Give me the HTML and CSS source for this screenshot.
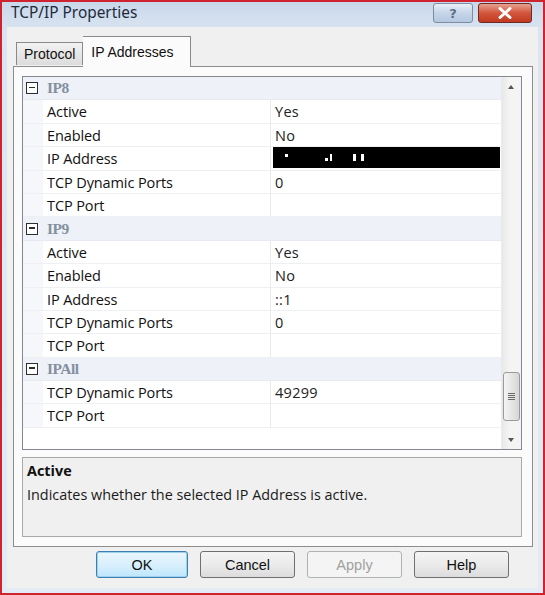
FILE: index.html
```html
<!DOCTYPE html>
<html>
<head>
<meta charset="utf-8">
<link rel="stylesheet" href="styles.css">
</head>
<body>
<div class="window">
  <div class="titlebar">
    <span class="title">TCP/IP Properties</span>
    <div class="caption-btns">
      <div class="cbtn help"><span>?</span></div>
      <div class="cbtn close">
        <svg width="18" height="12" viewBox="0 0 18 12"><path d="M4 1.5 L14 10.5 M14 1.5 L4 10.5" stroke="#fff" stroke-width="3" stroke-linecap="round"/></svg>
      </div>
    </div>
  </div>
  <div class="client">
    <div class="tabs">
      <div class="tab">Protocol</div>
      <div class="tab active">IP Addresses</div>
    </div>
    <div class="pane">
      <div class="grid">
        <div class="rows">
          <div class="cat"><span class="toggle"></span><span class="cat-name">IP8</span></div>
          <div class="prop"><span class="name">Active</span><span class="val">Yes</span></div>
          <div class="prop"><span class="name">Enabled</span><span class="val">No</span></div>
          <div class="prop"><span class="name">IP Address</span><span class="val"><span class="masked"><i class="d1"></i><i class="d2"></i><i class="d3"></i><i class="d4"></i><i class="d5"></i></span></span></div>
          <div class="prop"><span class="name">TCP Dynamic Ports</span><span class="val">0</span></div>
          <div class="prop"><span class="name">TCP Port</span><span class="val"></span></div>
          <div class="cat"><span class="toggle"></span><span class="cat-name">IP9</span></div>
          <div class="prop"><span class="name">Active</span><span class="val">Yes</span></div>
          <div class="prop"><span class="name">Enabled</span><span class="val">No</span></div>
          <div class="prop"><span class="name">IP Address</span><span class="val">::1</span></div>
          <div class="prop"><span class="name">TCP Dynamic Ports</span><span class="val">0</span></div>
          <div class="prop"><span class="name">TCP Port</span><span class="val"></span></div>
          <div class="cat"><span class="toggle"></span><span class="cat-name">IPAll</span></div>
          <div class="prop"><span class="name">TCP Dynamic Ports</span><span class="val">49299</span></div>
          <div class="prop"><span class="name">TCP Port</span><span class="val"></span></div>
        </div>
        <div class="scrollbar">
          <div class="arrow up"></div>
          <div class="track"><div class="thumb"><span class="grip"></span></div></div>
          <div class="arrow down"></div>
        </div>
      </div>
      <div class="desc">
        <div class="desc-title">Active</div>
        <div class="desc-text">Indicates whether the selected IP Address is active.</div>
      </div>
    </div>
    <div class="buttons">
      <div class="btn default">OK</div>
      <div class="btn">Cancel</div>
      <div class="btn disabled">Apply</div>
      <div class="btn">Help</div>
    </div>
  </div>
</div>
</body>
</html>
```

FILE: styles.css
```css
* { box-sizing: border-box; }
html, body { margin: 0; padding: 0; }
body { width: 545px; height: 595px; overflow: hidden; background: #fff; }

.window {
  width: 545px; height: 595px;
  border: 2px solid #cf2430;
  background: linear-gradient(#c9d8ea, #dbe5f1 30px, #e3ebf5);
  display: flex; flex-direction: column;
}
.titlebar {
  height: 25px; flex: none;
  display: flex; align-items: flex-start; justify-content: space-between;
  padding-left: 9px;
}
.title {
  font-family: "Noto Sans", "Open Sans", sans-serif;
  font-size: 15.4px; color: #1e2a3a; line-height: 21px;
}
.caption-btns { display: flex; gap: 5px; padding-top: 1px; padding-right: 11px; }
.cbtn {
  height: 20px; border-radius: 3px;
  display: flex; align-items: center; justify-content: center;
}
.cbtn.help {
  width: 40px; border: 1px solid #7c8ca3;
  background: linear-gradient(#e8eff8, #c6d5e8 50%, #b5c8df);
}
.cbtn.help span {
  font-family: "DejaVu Sans", sans-serif; font-weight: bold; font-size: 13px;
  color: #5c6f88; line-height: 1;
}
.cbtn.close {
  width: 54px; border: 1px solid #6b2b24;
  background: linear-gradient(#e9a08e, #d2563d 50%, #c2391f);
}

.client {
  flex: 1; margin: 0 5px 5px 5px;
  background: #f0f0f0;
  display: flex; flex-direction: column;
  padding: 8px 5px 0 6px;
}
.tabs { display: flex; align-items: flex-end; height: 31px; padding-left: 3px; position: relative; z-index: 1; }
.tab {
  font-family: "Liberation Sans", Arial, sans-serif; font-size: 14px; color: #111;
  height: 23px; padding: 0 7px; line-height: 22px;
  border: 1px solid #8a8a8a; border-bottom: none;
  background: linear-gradient(#f2f2f2, #dcdcdc);
  margin-bottom: 1px;
}
.tab.active {
  height: 31px; background: #fbfbfb; padding: 4px 16px 0 8px; margin-bottom: -1px;
  border-left: none;
}
.pane {
  border: 1px solid #8d8d8d;
  background: #fbfbfb;
  height: 481px;
  padding: 9px 10px 9px 8px;
  display: flex; flex-direction: column; gap: 7px;
}
.grid {
  height: 374px; flex: none;
  border: 1px solid #828790;
  background: #fff;
  display: flex;
}
.rows { flex: 1; display: flex; flex-direction: column; }
.cat, .prop {
  height: 23.4px; flex: none; display: flex; align-items: center;
  font-family: "Open Sans", "Noto Sans", sans-serif; font-size: 14.5px;
}
.cat { background: #eef2f8; border-bottom: 1px solid #e7ebf1; }
.toggle {
  width: 12px; height: 12px; border: 1.5px solid #2e2e2e; margin-left: 3px; margin-right: 9px;
  position: relative; background: #fff;
}
.toggle::after {
  content: ""; position: absolute; left: 2px; right: 2px; top: 3.5px; height: 1.5px; background: #2e2e2e;
}
.cat-name {
  font-family: "Liberation Serif", serif; font-weight: bold; font-size: 15.5px; color: #848fa0;
  letter-spacing: -0.5px;
}
.prop { background: #fff; }
.prop .name {
  width: 247px; height: 100%; padding-left: 24px; line-height: 23px; color: #111;
  background: linear-gradient(90deg, #f5f7fa 20px, #fff 20px);
  border-bottom: 1px solid #eef0f3;
  letter-spacing: -0.1px;
}
.prop .val {
  flex: 1; height: 100%; padding-left: 4px; line-height: 23px; color: #222;
  border-left: 1px solid #eaeaea; border-bottom: 1px solid #eef0f3;
  letter-spacing: 0.3px;
}
.masked {
  display: block; height: 21px; margin: 0 1px 0 -2px; background: #000; position: relative;
}
.masked i { position: absolute; background: #fff; width: 3px; }
.masked .d1 { left: 12px; top: 7px; height: 3px; }
.masked .d2 { left: 52px; top: 11px; height: 3px; }
.masked .d3 { left: 57px; top: 7px; height: 7px; width: 2px; }
.masked .d4 { left: 80px; top: 7px; height: 7px; }
.masked .d5 { left: 88px; top: 7px; height: 7px; }

.scrollbar {
  width: 20px; flex: none; background: linear-gradient(90deg, #e8e8e8, #f4f4f4 40%, #f4f4f4);
  display: flex; flex-direction: column; border-left: 1px solid #eaeaea;
}
.arrow { height: 19px; flex: none; position: relative; }
.arrow::after {
  content: ""; position: absolute; left: 6px; border-left: 3.5px solid transparent; border-right: 3.5px solid transparent;
}
.arrow.up::after { top: 8px; border-bottom: 4px solid #555; }
.arrow.down::after { top: 8px; border-top: 4px solid #555; }
.track { flex: 1; display: flex; flex-direction: column; justify-content: flex-end; padding-bottom: 9px; }
.thumb {
  height: 49px; margin: 0 1px; border: 1px solid #9a9a9a; border-radius: 3px;
  background: linear-gradient(90deg, #f4f4f4, #e3e3e3 60%, #d6d6d6);
  display: flex; align-items: center; justify-content: center;
}
.grip {
  width: 7px; height: 7px;
  background: repeating-linear-gradient(#6a6a6a 0 1px, transparent 1px 2px);
}

.desc {
  flex: 1; border: 1px solid #a9a9a9; background: #f0f0f0;
  padding: 3px 4px;
  font-family: "Open Sans", "Noto Sans", sans-serif; font-size: 14.4px; color: #111;
}
.desc-title { font-weight: bold; line-height: 20px; }
.desc-text { line-height: 27px; color: #1a1a1a; }

.buttons {
  display: flex; justify-content: flex-end; gap: 12px;
  padding: 4px 24px 0 0;
}
.btn {
  width: 95px; height: 27px; border: 1px solid #707070; border-radius: 3px;
  background: linear-gradient(#f4f4f4, #ebebeb 50%, #dcdcdc);
  font-family: "Liberation Sans", Arial, sans-serif; font-size: 14.5px; color: #111;
  display: flex; align-items: center; justify-content: center;
}
.btn.default {
  border: 1px solid #3c7fb1;
  box-shadow: inset 0 0 0 1px #9ed2ec;
  background: linear-gradient(#eaf6fd, #d9f0fc 50%, #bee6fd);
  width: 92px;
}
.btn.disabled { color: #a0a0a0; border-color: #adb2b5; background: #f4f4f4; }
```
